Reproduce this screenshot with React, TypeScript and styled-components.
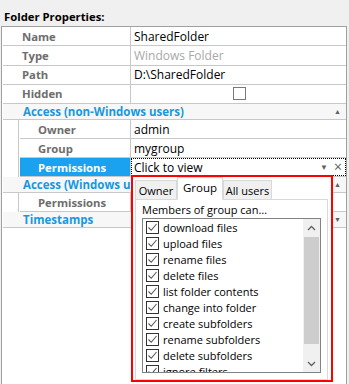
import React from 'react'
import styled, { createGlobalStyle } from 'styled-components'

const GlobalStyle = createGlobalStyle`
  html, body {
    margin: 0;
    padding: 0;
    background: #f0f0f0;
  }
  body {
    font-family: 'Open Sans', 'Liberation Sans', sans-serif;
    font-size: 12px;
    color: #000;
  }
`

const Page = styled.div`
  position: relative;
  width: 349px;
  height: 384px;
  overflow: hidden;
  background: #f0f0f0;
`

const Title = styled.div`
  height: 26px;
  padding: 0 0 1px 4px;
  display: flex;
  align-items: flex-end;
  font-weight: bold;
  font-size: 11.3px;
  line-height: 16px;
  box-sizing: border-box;
`

const Grid = styled.div`
  margin-left: 1px;
  width: 346px;
  height: 358px;
  box-sizing: border-box;
  border: 1px solid #a0a0a0;
  border-bottom: none;
  background: #fff;
`

const Row = styled.div<{ $indent?: boolean }>`
  display: grid;
  grid-template-columns: ${(p) => (p.$indent ? '111px' : '128px')} 1fr;
  height: ${(p) => (p.$indent ? '19px' : '19.25px')};
  box-sizing: border-box;
  border-bottom: 1px solid #c8c8c8;
  margin-left: 1px;
`

const Label = styled.div<{ $indent?: boolean; $selected?: boolean }>`
  display: flex;
  align-items: center;
  padding-left: ${(p) => (p.$indent ? '18px' : '19px')};
  font-weight: bold;
  font-size: 11.3px;
  color: ${(p) => (p.$selected ? '#fff' : '#6d6d6d')};
  background: ${(p) => (p.$selected ? '#1aa1f0' : 'transparent')};
  border-right: 1px solid #c8c8c8;
  white-space: nowrap;
  overflow: hidden;
`

const Value = styled.div<{ $muted?: boolean; $center?: boolean; $focus?: boolean }>`
  display: flex;
  align-items: center;
  justify-content: ${(p) => (p.$center ? 'center' : 'flex-start')};
  padding-left: 3px;
  padding-right: 4px;
  color: ${(p) => (p.$muted ? '#a8a8a8' : '#000')};
  white-space: nowrap;
  overflow: hidden;
  box-sizing: border-box;
  outline: ${(p) => (p.$focus ? '1px dotted #000' : 'none')};
  outline-offset: -1px;
`

const CheckBox = styled.span`
  width: 11px;
  height: 11px;
  border: 1px solid #7a7a7a;
  background: #fff;
  margin-left: 2px;
`

const SectionHeader = styled.div`
  display: flex;
  align-items: center;
  justify-content: space-between;
  height: 16px;
  box-sizing: border-box;
  padding: 0 5px 0 20px;
  margin-left: 1px;
  background: #f7f7f7;
  border-bottom: 1px solid #c8c8c8;
  color: #1798e0;
  font-weight: bold;
  font-size: 11.5px;
  white-space: nowrap;
`

const Arrow = styled.span`
  font-size: 7px;
  color: #606060;
  line-height: 1;
`

const SubRows = styled.div`
  margin-left: 16px;
  border-left: 1px solid #c8c8c8;
`

const ValueActions = styled.span`
  margin-left: auto;
  display: flex;
  align-items: center;
  gap: 6px;
  color: #606060;
`

const SmallGlyph = styled.span<{ $size: number }>`
  font-size: ${(p) => p.$size}px;
  line-height: 1;
`

const Popup = styled.div`
  position: absolute;
  left: 131px;
  top: 175px;
  width: 202px;
  height: 207px;
  box-sizing: border-box;
  border: 2px solid #ff0000;
  background: #fff;
  padding: 0 3px 4px 2px;
  display: flex;
  flex-direction: column;
  font-size: 11px;
`

const TabStrip = styled.div`
  display: flex;
  align-items: flex-end;
  height: 23px;
`

const Tab = styled.div<{ $active?: boolean; $width: number }>`
  width: ${(p) => p.$width}px;
  height: ${(p) => (p.$active ? '23px' : '20px')};
  box-sizing: border-box;
  padding-bottom: ${(p) => (p.$active ? '3px' : '0')};
  display: flex;
  align-items: center;
  justify-content: center;
  background: ${(p) => (p.$active ? '#fff' : '#f0f0f0')};
  border: 1px solid #d9d9d9;
  border-bottom-color: ${(p) => (p.$active ? '#fff' : '#d9d9d9')};
  margin-bottom: -1px;
  position: relative;
  z-index: ${(p) => (p.$active ? 1 : 0)};
  font-size: ${(p) => (p.$active ? '11.5px' : '11px')};
  white-space: nowrap;
`

const TabPanel = styled.div`
  flex: 1;
  border: 1px solid #d9d9d9;
  padding: 3px 6px 6px 6px;
  display: flex;
  flex-direction: column;
  gap: 1px;
`

const Caption = styled.div`
  line-height: 14px;
`

const ListBox = styled.div`
  display: flex;
  height: 153px;
  border: 1px solid #828282;
  overflow: hidden;
`

const Items = styled.div`
  flex: 1;
  overflow: hidden;
`

const Item = styled.div`
  display: flex;
  align-items: center;
  height: 16px;
  padding-left: 3px;
  gap: 4px;
  white-space: nowrap;
`

const ItemCheck = styled.span`
  display: inline-flex;
  width: 13px;
  height: 13px;
  flex: none;
  box-sizing: border-box;
  border: 1px solid #333;
  background: #fff;
  align-items: center;
  justify-content: center;
`

const ScrollBar = styled.div`
  width: 17px;
  background: #f0f0f0;
  display: flex;
  flex-direction: column;
`

const ScrollButton = styled.div`
  height: 17px;
  display: flex;
  align-items: center;
  justify-content: center;
`

const Thumb = styled.div`
  height: 107px;
  margin: 1px 1px 0 1px;
  background: #cdcdcd;
`

const Track = styled.div`
  flex: 1;
`

const Check = () => (
  <svg width="11" height="11" viewBox="0 0 11 11">
    <path d="M1.5 5.5 L4.2 8.3 L9.5 2" fill="none" stroke="#555" strokeWidth="1.1" />
  </svg>
)

const Chevron = ({ up }: { up?: boolean }) => (
  <svg width="9" height="6" viewBox="0 0 9 6">
    <path d={up ? 'M1 5 L4.5 1.5 L8 5' : 'M1 1 L4.5 4.5 L8 1'} fill="none" stroke="#606060" strokeWidth="1.3" />
  </svg>
)

const permissions = [
  'download files',
  'upload files',
  'rename files',
  'delete files',
  'list folder contents',
  'change into folder',
  'create subfolders',
  'rename subfolders',
  'delete subfolders',
  'ignore filters'
]

export default function App() {
  return (
    <Page>
      <GlobalStyle />
      <Title>Folder Properties:</Title>
      <Grid>
        <Row>
          <Label>Name</Label>
          <Value>SharedFolder</Value>
        </Row>
        <Row>
          <Label>Type</Label>
          <Value $muted>Windows Folder</Value>
        </Row>
        <Row>
          <Label>Path</Label>
          <Value>D:\SharedFolder</Value>
        </Row>
        <Row>
          <Label>Hidden</Label>
          <Value $center>
            <CheckBox />
          </Value>
        </Row>
        <SectionHeader>
          <span>Access (non-Windows users)</span>
          <Arrow>▲</Arrow>
        </SectionHeader>
        <SubRows>
          <Row $indent>
            <Label $indent>Owner</Label>
            <Value>admin</Value>
          </Row>
          <Row $indent>
            <Label $indent>Group</Label>
            <Value>mygroup</Value>
          </Row>
          <Row $indent>
            <Label $indent $selected>
              Permissions
            </Label>
            <Value $focus>
              Click to view
              <ValueActions>
                <SmallGlyph $size={8}>▼</SmallGlyph>
                <SmallGlyph $size={14}>×</SmallGlyph>
              </ValueActions>
            </Value>
          </Row>
        </SubRows>
        <SectionHeader>
          <span>Access (Windows users)</span>
          <Arrow>▲</Arrow>
        </SectionHeader>
        <SubRows>
          <Row $indent>
            <Label $indent>Permissions</Label>
            <Value />
          </Row>
        </SubRows>
        <SectionHeader>
          <span>Timestamps</span>
          <Arrow>▼</Arrow>
        </SectionHeader>
      </Grid>

      <Popup>
        <TabStrip>
          <Tab $width={42}>Owner</Tab>
          <Tab $active $width={46}>
            Group
          </Tab>
          <Tab $width={49}>All users</Tab>
        </TabStrip>
        <TabPanel>
          <Caption>Members of group can…</Caption>
          <ListBox>
            <Items>
              {permissions.map((p) => (
                <Item key={p}>
                  <ItemCheck>
                    <Check />
                  </ItemCheck>
                  {p}
                </Item>
              ))}
            </Items>
            <ScrollBar>
              <ScrollButton>
                <Chevron up />
              </ScrollButton>
              <Thumb />
              <Track />
              <ScrollButton>
                <Chevron />
              </ScrollButton>
            </ScrollBar>
          </ListBox>
        </TabPanel>
      </Popup>
    </Page>
  )
}
